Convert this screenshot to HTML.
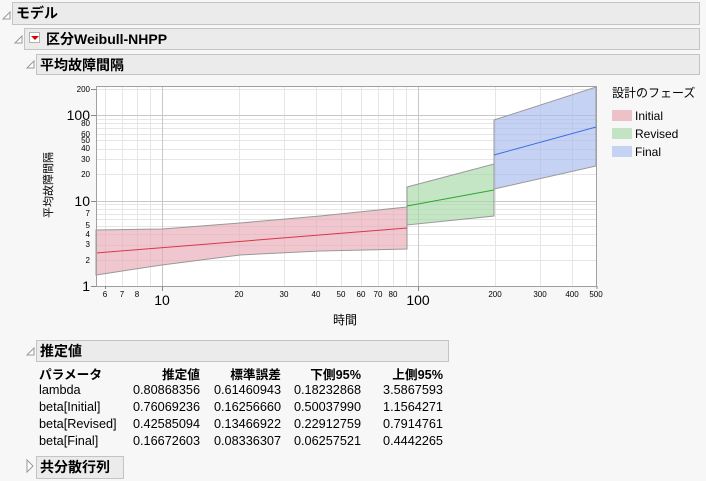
<!DOCTYPE html>
<html><head><meta charset="utf-8"><style>
body{margin:0;width:706px;height:481px;background:#f7f7f7;font-family:"Liberation Sans","Noto Sans CJK JP",sans-serif;position:relative;overflow:hidden}
.bar{position:absolute;background:#ebebeb;border:1px solid #c4c4c4;font-weight:bold;font-size:14px;line-height:20px;padding-left:3px;box-sizing:border-box;color:#000}
.t{position:absolute;font-size:12.7px;color:#000;white-space:nowrap}
.r{text-align:right}
</style></head><body>
<svg width="706" height="481" style="position:absolute;left:0;top:0">
<g fill="#fff" stroke="#999" stroke-width="1">
<path d="M3,19 L10,12 L10,19 Z" fill="#fff"/>
<path d="M15,43 L22,36 L22,43 Z"/>
<path d="M27,68 L34,61 L34,68 Z"/>
<path d="M27,355 L34,348 L34,355 Z"/>
<path d="M27,460 L33,466 L27,472 Z"/>
</g>
<rect x="96" y="86" width="501" height="200" fill="#fff"/>
<g stroke="#e6e6e6" stroke-width="1">
<path d="M105.5,86V286M122.5,86V286M137.5,86V286M150.5,86V286M239.5,86V286M284.5,86V286M316.5,86V286M341.5,86V286M361.5,86V286M378.5,86V286M393.5,86V286M406.5,86V286M495.5,86V286M540.5,86V286M572.5,86V286"/>
<path d="M96,260.5H597M96,245.5H597M96,234.5H597M96,226.5H597M96,219.5H597M96,214.5H597M96,209.5H597M96,204.5H597M96,174.5H597M96,159.5H597M96,149.5H597M96,140.5H597M96,134.5H597M96,128.5H597M96,123.5H597M96,119.5H597M96,89.5H597"/>
</g>
<g stroke="#c8c8c8"><path d="M162.5,86V286M418.5,86V286M96,201.5H597M96,115.5H597"/></g>
<path d="M96,230 L162,229 L240,223 L320,216 L407,207 L407,249 L320,251 L240,255 L162,265 L96,275 Z" fill="#e8a9b3" fill-opacity="0.65" stroke="#999"/>
<path d="M407,187 L494,164 L494,216 L407,225 Z" fill="#a6d8a6" fill-opacity="0.65" stroke="#999"/>
<path d="M494,120 L596,87 L596,166 L494,189 Z" fill="#a6baec" fill-opacity="0.65" stroke="#999"/>
<path d="M96,253 L407,228" stroke="#d9364b" stroke-width="1"/>
<path d="M407,206 L494,190" stroke="#2ea62e" stroke-width="1"/>
<path d="M494,155 L596,127" stroke="#3b6ee0" stroke-width="1"/>
<rect x="96.5" y="86.5" width="500" height="200" fill="none" stroke="#a0a0a0"/>
<g stroke="#888"><path d="M91,89.5H96M91,115.5H96M91,201.5H96M91,286.5H96M162.5,286V291M418.5,286V291M105.5,286V289M597,286V289"/></g>
<g font-size="8" fill="#000" text-anchor="end" font-family="Liberation Sans,sans-serif">
<text x="90" y="92">200</text><text x="90" y="126">80</text><text x="90" y="137">60</text><text x="90" y="143">50</text><text x="90" y="151">40</text><text x="90" y="162">30</text><text x="90" y="177">20</text><text x="90" y="216">7</text><text x="90" y="228">5</text><text x="90" y="237">4</text><text x="90" y="247">3</text><text x="90" y="263">2</text>
</g>
<g font-size="14" fill="#000" text-anchor="end"><text x="90" y="120">100</text><text x="90" y="206">10</text><text x="90" y="291">1</text></g>
<g font-size="8" fill="#000" text-anchor="middle">
<text x="105" y="297">6</text><text x="122" y="297">7</text><text x="137" y="297">8</text><text x="239" y="297">20</text><text x="284" y="297">30</text><text x="316" y="297">40</text><text x="341" y="297">50</text><text x="361" y="297">60</text><text x="378" y="297">70</text><text x="393" y="297">80</text><text x="495" y="297">200</text><text x="540" y="297">300</text><text x="572" y="297">400</text><text x="596" y="297">500</text>
</g>
<g font-size="14" fill="#000" text-anchor="middle"><text x="162" y="305">10</text><text x="418" y="305">100</text></g>
<text x="345" y="324" font-size="12" text-anchor="middle">時間</text>
<text transform="translate(52,185) rotate(-90)" font-size="11" text-anchor="middle">平均故障間隔</text>
<text x="612" y="97" font-size="12">設計のフェーズ</text>
<rect x="612" y="110" width="20" height="11" fill="#ecc1c7"/><text x="635" y="120" font-size="12">Initial</text>
<rect x="612" y="128" width="20" height="11" fill="#c3e3c3"/><text x="635" y="138" font-size="12">Revised</text>
<rect x="612" y="146" width="20" height="11" fill="#c5d3f2"/><text x="635" y="156" font-size="12">Final</text>
</svg>
<div class="bar" style="left:12px;top:2px;width:688px;height:23px">モデル</div>
<div class="bar" style="left:24px;top:28px;width:676px;height:22px;padding-left:21px">区分Weibull-NHPP</div>
<div style="position:absolute;left:29px;top:32px;width:11px;height:11px;border:1px solid #b0b0b0;background:#fff;box-sizing:border-box"><div style="position:absolute;left:1px;top:3px;border-left:4px solid transparent;border-right:4px solid transparent;border-top:4px solid #d00"></div></div>
<div class="bar" style="left:36px;top:54px;width:664px;height:21px">平均故障間隔</div>
<div class="bar" style="left:36px;top:340px;width:413px;height:22px">推定値</div>
<div class="bar" style="left:36px;top:456px;width:88px;height:23px">共分散行列</div>
<div class="t" style="left:39px;top:364px;font-weight:bold">パラメータ</div>
<div class="t r" style="left:100px;top:364px;width:100px;font-weight:bold">推定値</div>
<div class="t r" style="left:181px;top:364px;width:100px;font-weight:bold">標準誤差</div>
<div class="t r" style="left:261px;top:364px;width:100px;font-weight:bold">下側95%</div>
<div class="t r" style="left:343px;top:364px;width:100px;font-weight:bold">上側95%</div>
<div class="t" style="left:39px;top:382px;line-height:17px">lambda<br>beta[Initial]<br>beta[Revised]<br>beta[Final]</div>
<div class="t r" style="left:100px;top:382px;width:100px;line-height:17px">0.80868356<br>0.76069236<br>0.42585094<br>0.16672603</div>
<div class="t r" style="left:181px;top:382px;width:100px;line-height:17px">0.61460943<br>0.16256660<br>0.13466922<br>0.08336307</div>
<div class="t r" style="left:261px;top:382px;width:100px;line-height:17px">0.18232868<br>0.50037990<br>0.22912759<br>0.06257521</div>
<div class="t r" style="left:343px;top:382px;width:100px;line-height:17px">3.5867593<br>1.1564271<br>0.7914761<br>0.4442265</div>
</body></html>
